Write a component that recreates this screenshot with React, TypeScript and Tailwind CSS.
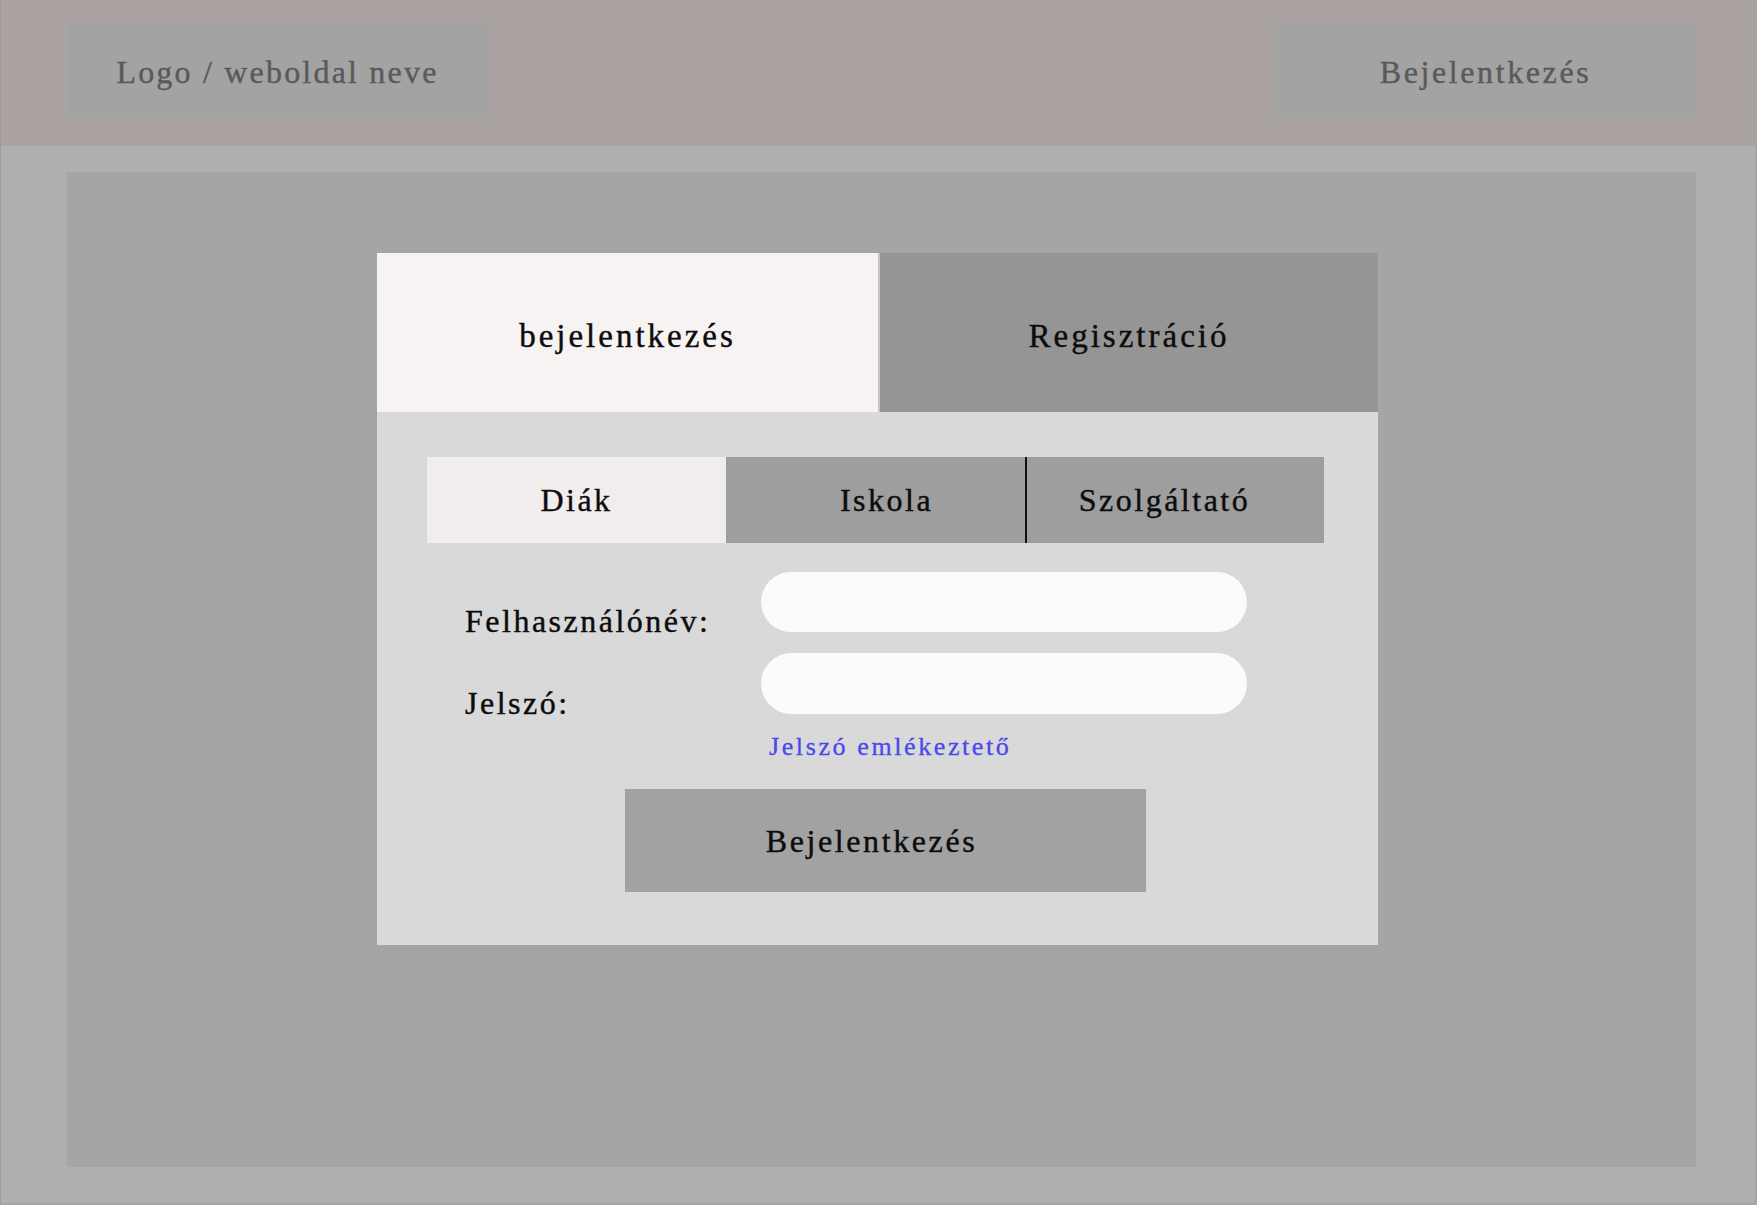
const serif = "font-['Liberation_Serif','Times_New_Roman',serif]"

const ROLES = [
  { name: 'Diák', shift: '' },
  { name: 'Iskola', shift: 'pl-[22px]' },
  { name: 'Szolgáltató', shift: 'pr-[22px]' },
]

function Field({ label, tall }: { label: string; tall?: boolean }) {
  return (
    <div className="flex items-end">
      <span className="mb-[-5px] w-[296px] text-[32px] leading-none tracking-[2.5px] text-[#0c0c0c] [-webkit-text-stroke:0.4px_#0c0c0c]">
        {label}
      </span>
      <input
        type="text"
        className={`${tall ? 'h-[61px]' : 'h-[60px]'} w-[486px] rounded-full bg-[#fcfbf9] px-6 text-[24px] outline-none`}
      />
    </div>
  )
}

export default function App() {
  return (
    <div className={`${serif} w-[1757px] border-l border-[#9c9c9c] bg-[#f0f0f0]`}>
      {/* Top bar */}
      <header className="flex h-[146px] items-start justify-between bg-[#aba3a2] pl-[66px] pr-[60px] pt-[22px]">
        <div className="flex h-[97px] w-[421px] items-center justify-center bg-[#a3a3a3] pt-[3px] text-[32px] tracking-[2.2px] text-[#5a5a5a] [-webkit-text-stroke:0.4px_#5a5a5a]">
          Logo / weboldal neve
        </div>
        <div className="flex h-[97px] w-[423px] items-center justify-center bg-[#a3a3a3] pt-[3px] text-[32px] tracking-[2.6px] text-[#5a5a5a] [-webkit-text-stroke:0.4px_#5a5a5a]">
          Bejelentkezés
        </div>
      </header>

      <main className="h-[1059px] border-b-2 border-r-2 border-[#a5a5a5] bg-[#afafaf] pl-[66px] pr-[59px] pt-[26px]">
        <div className="h-[995px] bg-[#a5a5a5] pl-[310px] pt-[81px]">
          <div className="w-[1001px] bg-[#d9d9d9]">
            {/* Login / register tabs */}
            <div className="flex h-[159px]">
              <div className="flex w-[503px] items-center justify-center border-r-2 border-[#c6c6c6] bg-[#f6f3f2] pt-[8px] text-[33px] tracking-[3px] text-[#0c0c0c] [-webkit-text-stroke:0.4px_#0c0c0c]">
                bejelentkezés
              </div>
              <div className="flex flex-1 items-center justify-center bg-[#959595] pt-[8px] text-[33px] tracking-[3px] text-[#0c0c0c] [-webkit-text-stroke:0.4px_#0c0c0c]">
                Regisztráció
              </div>
            </div>

            <div className="pb-[53px] pl-[50px] pt-[45px]">
              {/* Role tabs */}
              <div className="grid h-[86px] w-[897px] grid-cols-3">
                {ROLES.map((role, i) => (
                  <div
                    key={role.name}
                    className={`flex items-center justify-center text-[32px] tracking-[2.5px] text-[#0c0c0c] [-webkit-text-stroke:0.4px_#0c0c0c] ${role.shift} ${
                      i === 0 ? 'bg-[#f1eded]' : 'bg-[#9e9e9e]'
                    } ${i === 2 ? 'border-l-2 border-[#111]' : ''}`}
                  >
                    {role.name}
                  </div>
                ))}
              </div>

              <div className="ml-[38px] mt-[29px] flex flex-col gap-[21px]">
                <Field label="Felhasználónév:" />
                <Field label="Jelszó:" tall />
              </div>

              <div className="ml-[342px] mt-[17px] text-[26px] leading-[32px] tracking-[2.6px] text-[#4848ee] [-webkit-text-stroke:0.3px_#4848ee]">
                Jelszó emlékeztető
              </div>

              <button className="ml-[198px] mt-[26px] flex h-[103px] w-[521px] items-center justify-center bg-[#a2a2a2] pr-[28px] text-[32px] tracking-[2.6px] text-[#0c0c0c] [-webkit-text-stroke:0.4px_#0c0c0c]">
                Bejelentkezés
              </button>
            </div>
          </div>
        </div>
      </main>
    </div>
  )
}
